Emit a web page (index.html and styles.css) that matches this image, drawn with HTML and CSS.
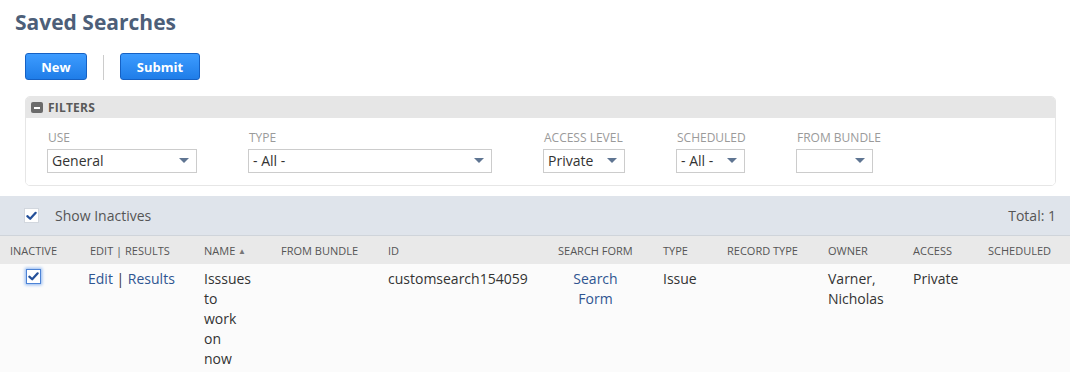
FILE: index.html
```html
<!DOCTYPE html>
<html lang="en">
<head>
<meta charset="utf-8">
<title>Saved Searches</title>
<link rel="stylesheet" href="styles.css">
</head>
<body>
<h1 class="title">Saved Searches</h1>
<div class="toolbar">
  <button class="btn btn-new">New</button>
  <span class="sep"></span>
  <button class="btn btn-submit">Submit</button>
</div>

<section class="filters">
  <div class="filters-head"><span class="minus"></span>FILTERS</div>
  <div class="filters-body">
    <div class="field f-use">
      <div class="label">USE</div>
      <div class="select"><span>General</span><i class="arrow"></i></div>
    </div>
    <div class="field f-type">
      <div class="label">TYPE</div>
      <div class="select"><span>- All -</span><i class="arrow"></i></div>
    </div>
    <div class="field f-access">
      <div class="label">ACCESS LEVEL</div>
      <div class="select"><span>Private</span><i class="arrow"></i></div>
    </div>
    <div class="field f-sched">
      <div class="label">SCHEDULED</div>
      <div class="select"><span>- All -</span><i class="arrow"></i></div>
    </div>
    <div class="field f-bundle">
      <div class="label">FROM BUNDLE</div>
      <div class="select"><span></span><i class="arrow"></i></div>
    </div>
  </div>
</section>

<div class="inactives-bar">
  <label class="show">
    <span class="cb"><svg viewBox="0 0 14 14" width="14" height="14"><path d="M2.5 7.2 L5.6 10 L11.5 3.6" fill="none" stroke="#24509a" stroke-width="2.4" stroke-linecap="round" stroke-linejoin="round"/></svg></span>
    Show Inactives
  </label>
  <span class="total">Total: 1</span>
</div>

<table class="results">
  <colgroup>
    <col class="c-inactive"><col class="c-edit"><col class="c-name"><col class="c-bundle"><col class="c-id"><col class="c-form"><col class="c-type"><col class="c-rtype"><col class="c-owner"><col class="c-access"><col class="c-sched">
  </colgroup>
  <thead>
    <tr>
      <th class="center-col">INACTIVE</th>
      <th class="edit-col">EDIT | RESULTS</th>
      <th>NAME <span class="sort">&#9650;</span></th>
      <th>FROM BUNDLE</th>
      <th>ID</th>
      <th class="form-col">SEARCH FORM</th>
      <th>TYPE</th>
      <th>RECORD TYPE</th>
      <th>OWNER</th>
      <th>ACCESS</th>
      <th>SCHEDULED</th>
    </tr>
  </thead>
  <tbody>
    <tr>
      <td class="center-col"><span class="cb cb-focus"><svg viewBox="0 0 14 14" width="13" height="13"><path d="M2.5 7.2 L5.6 10 L11.5 3.6" fill="none" stroke="#24509a" stroke-width="2.4" stroke-linecap="round" stroke-linejoin="round"/></svg></span></td>
      <td><a class="link">Edit</a> | <a class="link">Results</a></td>
      <td><span class="name-text">Isssues to work on now</span></td>
      <td></td>
      <td>customsearch154059</td>
      <td class="form-col td-center"><a class="link">Search Form</a></td>
      <td>Issue</td>
      <td></td>
      <td>Varner, Nicholas</td>
      <td>Private</td>
      <td></td>
    </tr>
  </tbody>
</table>
</body>
</html>
```

FILE: styles.css
```css
* { box-sizing: border-box; }

body {
  margin: 0;
  background: #ffffff;
  font-family: "Open Sans", "Liberation Sans", sans-serif;
  color: #333333;
  width: 1070px;
  height: 372px;
  overflow: hidden;
}

.title {
  margin: 0;
  padding: 8px 0 0 15px;
  font-size: 21px;
  line-height: 28px;
  font-weight: 700;
  color: #4d5f79;
}

.toolbar {
  display: flex;
  align-items: center;
  gap: 16px;
  margin: 17px 0 0 25px;
  height: 27px;
}

.btn {
  height: 27px;
  border: 1px solid #1561c4;
  border-radius: 3px;
  background: linear-gradient(#3d9cff, #1f7de8);
  color: #ffffff;
  font-family: "Open Sans", "Liberation Sans", sans-serif;
  font-size: 13px;
  font-weight: 700;
  padding: 0;
  cursor: pointer;
}

.btn-new { width: 62px; }
.btn-submit { width: 80px; }

.sep {
  width: 1px;
  height: 25px;
  background: #cccccc;
  margin-top: 2px;
}

.filters {
  margin: 16px 14px 0 25px;
  border-radius: 5px;
  border: 1px solid #e6e6e6;
  overflow: hidden;
}

.filters-head {
  height: 21px;
  background: #e6e6e6;
  display: flex;
  align-items: center;
  padding-left: 5px;
  font-size: 12px;
  font-weight: 700;
  color: #595959;
  letter-spacing: 0.2px;
}

.minus {
  width: 12px;
  height: 11px;
  background: #6b6b6b;
  border-radius: 2px;
  margin-right: 5px;
  position: relative;
}

.minus::after {
  content: "";
  position: absolute;
  left: 3px;
  right: 3px;
  top: 5px;
  height: 2px;
  background: #ffffff;
}

.filters-body {
  display: flex;
  padding: 12px 0 12px 21px;
  background: #ffffff;
}

.field { margin-right: 51px; }
.f-use { width: 150px; }
.f-type { width: 244px; }
.f-access { width: 82px; }
.f-sched { width: 69px; }
.f-bundle { width: 77px; margin-right: 0; }

.label {
  font-size: 12px;
  line-height: 16px;
  color: #9a9a9a;
  white-space: nowrap;
  padding-left: 1px;
}

.select {
  margin-top: 3px;
  height: 24px;
  border: 1px solid #cccccc;
  background: #ffffff;
  display: flex;
  align-items: center;
  justify-content: space-between;
  padding: 0 7px 1px 4px;
  font-size: 14px;
  color: #333333;
}

.arrow {
  width: 0;
  height: 0;
  border-left: 5px solid transparent;
  border-right: 5px solid transparent;
  border-top: 5px solid #5f7592;
}

.inactives-bar {
  margin-top: 10px;
  height: 40px;
  background: #dfe4eb;
  border-bottom: 1px solid #cfd4da;
  display: flex;
  align-items: center;
  justify-content: space-between;
  padding: 0 14px 0 24px;
  font-size: 14px;
  color: #555555;
}

.show {
  display: flex;
  align-items: center;
  gap: 16px;
}

.cb {
  width: 15px;
  height: 15px;
  background: #ffffff;
  border: 1px solid #d2d7de;
  display: inline-flex;
  align-items: center;
  justify-content: center;
}

.cb-focus {
  border: 1px solid #4c83d6;
  box-shadow: 0 0 3px 1px #8fb6ef;
}

.results {
  width: 1070px;
  border-collapse: collapse;
  table-layout: fixed;
}

.c-inactive { width: 78px; }
.c-edit { width: 116px; }
.c-name { width: 77px; }
.c-bundle { width: 107px; }
.c-id { width: 170px; }
.c-form { width: 105px; }
.c-type { width: 64px; }
.c-rtype { width: 101px; }
.c-owner { width: 85px; }
.c-access { width: 75px; }
.c-sched { width: 92px; }

.results th {
  height: 28px;
  background: #e9e9e9;
  font-size: 11px;
  font-weight: 400;
  color: #555555;
  text-align: left;
  padding: 0 10px;
  white-space: nowrap;
}

.results th.edit-col { padding-left: 12px; }

.results th .sort {
  font-size: 8px;
  color: #777777;
  vertical-align: 1px;
}

.results td {
  background: #fbfbfb;
  vertical-align: top;
  padding: 5px 10px 0 10px;
  font-size: 14px;
  line-height: 20px;
  color: #333333;
  height: 120px;
}

.name-text {
  display: inline-block;
  width: min-content;
}

.results .center-col {
  text-align: center;
  padding-right: 21px;
}

.results td.center-col { padding-top: 5px; line-height: 0; }

.results .form-col { padding-right: 20px; }
.results td.td-center { text-align: center; }

.link {
  color: #2f5591;
  text-decoration: none;
}
```
